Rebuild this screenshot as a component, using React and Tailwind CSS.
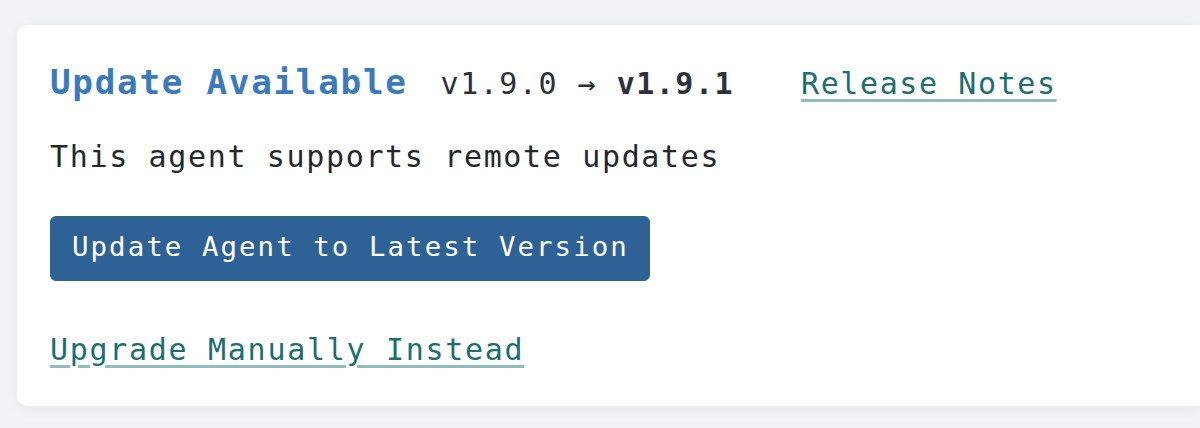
export default function App() {
  return (
    <div className="h-[428px] overflow-hidden bg-[#f2f3f6] pt-[25px] pl-[17px] font-['DejaVu_Sans_Mono',monospace]">
      {/* ── Update card ── */}
      <div className="h-[381px] rounded-l-[10px] bg-white pl-[33px] pt-[33px] shadow-[0_2px_14px_rgba(20,30,60,0.06)]">
        <div className="flex items-baseline leading-[48px]">
          <h2 className="text-[34.3px] font-bold tracking-[1.7px] text-[#3a7abd]">Update Available</h2>
          <span className="ml-[33px] text-[30px] tracking-[1.5px] text-[#2b2f36]">
            v1.9.0 → <span className="font-bold text-[#2c313b]">v1.9.1</span>
          </span>
          <a
            href="#"
            className="ml-[67px] text-[30px] tracking-[1.6px] text-[#1b6f6f] underline decoration-[#8fbcbc] decoration-[3px] underline-offset-[5px]"
          >
            Release Notes
          </a>
        </div>

        <p className="mt-[25px] text-[30px] leading-[48px] tracking-[1.65px] text-[#24272c]">
          This agent supports remote updates
        </p>

        <button className="mt-[35px] flex h-[65px] items-center rounded-[6px] border border-[#2b6a72] bg-[#2e6296] pb-[4px] pl-[21px] pr-[20px] text-[27.4px] tracking-[2.07px] text-white">
          Update Agent to Latest Version
        </button>

        <a
          href="#"
          className="mt-[45px] block w-fit text-[30px] leading-[48px] tracking-[1.7px] text-[#1b6f6f] underline decoration-[#8fbcbc] decoration-[3px] underline-offset-[5px]"
        >
          Upgrade Manually Instead
        </a>
      </div>
    </div>
  );
}
